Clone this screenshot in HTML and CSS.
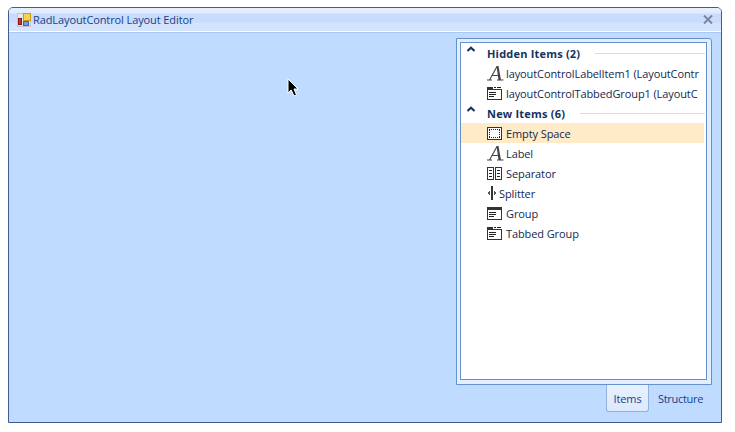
FILE: index.html
```html
<!DOCTYPE html>
<html lang="en">

<head>
    <meta charset="UTF-8">
    <title>RadLayoutControl Layout Editor</title>
    <link rel="stylesheet" href="styles.css">
</head>

<body>
    <div class="window">
        <div class="titlebar">
            <svg class="app-icon" width="14" height="14" viewBox="0 0 14 14">
                <rect x="0.5" y="0.5" width="13" height="13" fill="#e6e6ea" stroke="#c4c4cc"/>
                <rect x="6.5" y="0.5" width="7" height="7" fill="#f7d34a" stroke="#c89a20"/>
                <rect x="1.5" y="5.5" width="3" height="6" fill="#c8302a" stroke="#8a1a18"/>
                <rect x="6.5" y="8.5" width="5" height="4" fill="#6f9be0" stroke="#3a66b0"/>
            </svg>
            <span class="title">RadLayoutControl Layout Editor</span>
            <svg class="close" width="10" height="9" viewBox="0 0 10 9">
                <path d="M1 0.5 L9 8.5 M9 0.5 L1 8.5" stroke="#7787a0" stroke-width="2" fill="none"/>
            </svg>
        </div>

        <div class="content">
            <div class="panel">
                <div class="list">
                    <div class="group">
                        <svg class="chevron" width="8" height="6" viewBox="0 0 8 6"><path d="M0.5 5 L4 1.7 L7.5 5" stroke="#15325f" stroke-width="2" fill="none"/></svg>
                        <span class="group-name">Hidden Items (2)</span>
                        <span class="group-line"></span>
                    </div>
                    <div class="item">
                        <svg class="icon-a" width="17" height="16" viewBox="0 0 17 16"><use href="#letter"/></svg>
                        <span>layoutControlLabelItem1 (LayoutContr</span>
                    </div>
                    <div class="item">
                        <svg class="icon" width="16" height="16" viewBox="0 0 16 16"><use href="#tabbed"/></svg>
                        <span>layoutControlTabbedGroup1 (LayoutC</span>
                    </div>
                    <div class="group">
                        <svg class="chevron" width="8" height="6" viewBox="0 0 8 6"><path d="M0.5 5 L4 1.7 L7.5 5" stroke="#15325f" stroke-width="2" fill="none"/></svg>
                        <span class="group-name">New Items (6)</span>
                        <span class="group-line"></span>
                    </div>
                    <div class="item selected">
                        <svg class="icon" width="16" height="16" viewBox="0 0 16 16">
                            <rect x="0.5" y="2.5" width="14" height="12" fill="#fff" stroke="#333"/>
                            <path d="M2 4.5 H13 M2 12.5 H13 M2.5 5 V12 M12.5 5 V12" stroke="#222" stroke-dasharray="1 1" fill="none"/>
                        </svg>
                        <span>Empty Space</span>
                    </div>
                    <div class="item">
                        <svg class="icon-a" width="17" height="16" viewBox="0 0 17 16"><use href="#letter"/></svg>
                        <span>Label</span>
                    </div>
                    <div class="item">
                        <svg class="icon" width="16" height="16" viewBox="0 0 16 16">
                            <rect x="0.5" y="2.5" width="6" height="12" fill="#fff" stroke="#333"/>
                            <rect x="8.5" y="2.5" width="6" height="12" fill="#fff" stroke="#333"/>
                            <path d="M2 5.5 H5 M2 8.5 H5 M2 11.5 H5 M10 5.5 H13 M10 8.5 H13 M10 11.5 H13" stroke="#222" fill="none"/>
                        </svg>
                        <span>Separator</span>
                    </div>
                    <div class="item">
                        <svg class="icon-split" width="10" height="16" viewBox="0 0 10 16">
                            <rect x="4" y="1" width="2" height="14" fill="#333"/>
                            <path d="M0 8 L3 5.5 V10.5 Z M10 8 L7 5.5 V10.5 Z" fill="#555"/>
                        </svg>
                        <span>Splitter</span>
                    </div>
                    <div class="item">
                        <svg class="icon" width="16" height="16" viewBox="0 0 16 16">
                            <rect x="0.5" y="2.5" width="14" height="12" fill="#fff" stroke="#333"/>
                            <rect x="0" y="2" width="15" height="3" fill="#333"/>
                            <path d="M2 7.5 H9 M2 9.5 H9 M2 11.5 H7" stroke="#222" fill="none"/>
                        </svg>
                        <span>Group</span>
                    </div>
                    <div class="item">
                        <svg class="icon" width="16" height="16" viewBox="0 0 16 16"><use href="#tabbed"/></svg>
                        <span>Tabbed Group</span>
                    </div>
                </div>
            </div>

            <div class="tabs">
                <div class="tab active">Items</div>
                <div class="tab">Structure</div>
            </div>
        </div>

        <svg class="cursor" width="12" height="19" viewBox="0 0 12 19">
            <path d="M1 1 V15 L4.2 12 L7 18 L9.5 17 L7 11 H11 Z" fill="#000" stroke="#fff" stroke-width="1"/>
        </svg>
    </div>

    <svg class="defs" width="0" height="0">
        <defs>
            <g id="letter">
                <path d="M0 15 H5 M2.5 15 L10 1.5 M4.5 10.5 H12 M10 15 H16.5" stroke="#444" stroke-width="1.1" fill="none"/>
                <path d="M9.5 1 H11.5 L14 15 H11.5 Z" fill="#444"/>
            </g>
            <g id="tabbed">
                <rect x="0.5" y="4.5" width="14" height="10" fill="#fff" stroke="#333"/>
                <rect x="0" y="2" width="6" height="3" fill="#333"/>
                <path d="M7 2.5 H9 M10 2.5 H14 M2 7.5 H9 M2 9.5 H9 M2 11.5 H7" stroke="#222" fill="none"/>
            </g>
        </defs>
    </svg>
</body>

</html>
```

FILE: styles.css
```css
body {
    margin: 0;
    background-color: #fff;
    font-family: 'Open Sans', sans-serif;
    font-size: 11px;
}

.defs {
    position: absolute;
}

.window {
    position: relative;
    box-sizing: border-box;
    width: 714px;
    height: 416px;
    margin: 7px 0 0 8px;
    display: flex;
    flex-direction: column;
    border: 1px solid #3b5f8e;
    border-radius: 5px 5px 0 0;
    background-color: #bfdbff;
}

.titlebar {
    height: 23px;
    display: flex;
    align-items: center;
    padding-left: 8px;
    padding-right: 8px;
    border-bottom: 1px solid #fff;
    border-radius: 4px 4px 0 0;
    background: linear-gradient(#e4efff 0, #e0ecff 5px, #c9dcfd 6px, #c9dcfd 14px, #d5e4fd 15px, #d5e4fd 100%);
    box-shadow: 0 1px 0 #a9c8f5;
}

.app-icon {
    flex: none;
}

.title {
    flex: 1;
    margin-left: 2px;
    letter-spacing: -0.1px;
    color: #15428b;
}

.content {
    flex: 1;
    display: flex;
    flex-direction: column;
    align-items: flex-end;
    padding: 6px 9px 9px 0;
}

.panel {
    box-sizing: border-box;
    width: 256px;
    height: 347px;
    padding: 3px 4px 4px 3px;
    border: 1px solid #6591cd;
    border-radius: 0 3px 0 0;
    background-color: #e3efff;
}

.list {
    box-sizing: border-box;
    height: 100%;
    overflow: hidden;
    border: 1px solid #6591cd;
    background-color: #fff;
}

.group,
.item {
    height: 20px;
    display: flex;
    align-items: center;
    white-space: nowrap;
}

.group {
    padding-left: 6px;
}

.chevron {
    flex: none;
    margin-bottom: 9px;
}

.group-name {
    margin-left: 12px;
    font-weight: 700;
    letter-spacing: 0.2px;
    color: #15325f;
}

.group-line {
    flex: 1;
    height: 1px;
    margin: 1px 1px 0 15px;
    background-color: #d5dde8;
}

.item {
    padding-left: 26px;
    letter-spacing: -0.1px;
    color: #14284f;
}

.item.selected {
    margin-right: 2px;
    background-color: #ffebc8;
}

.item svg {
    shape-rendering: crispEdges;
}

.item .icon-a {
    shape-rendering: auto;
}

.icon {
    flex: none;
    margin-right: 3px;
}

.icon-a {
    flex: none;
    margin-right: 2px;
}

.icon-split {
    flex: none;
    margin-right: 2px;
}

.tabs {
    display: flex;
}

.tab {
    box-sizing: border-box;
    width: 63px;
    height: 27px;
    padding-left: 9px;
    line-height: 27px;
    letter-spacing: -0.3px;
    color: #15428b;
}

.tab.active {
    width: 43px;
    padding: 0;
    text-align: center;
    letter-spacing: -0.1px;
    border: 1px solid #8fb2e0;
    border-top: none;
    border-radius: 0 0 3px 3px;
    background: linear-gradient(#e8f1ff, #dce9fd);
}

.cursor {
    position: absolute;
    left: 278px;
    top: 70px;
}
```
